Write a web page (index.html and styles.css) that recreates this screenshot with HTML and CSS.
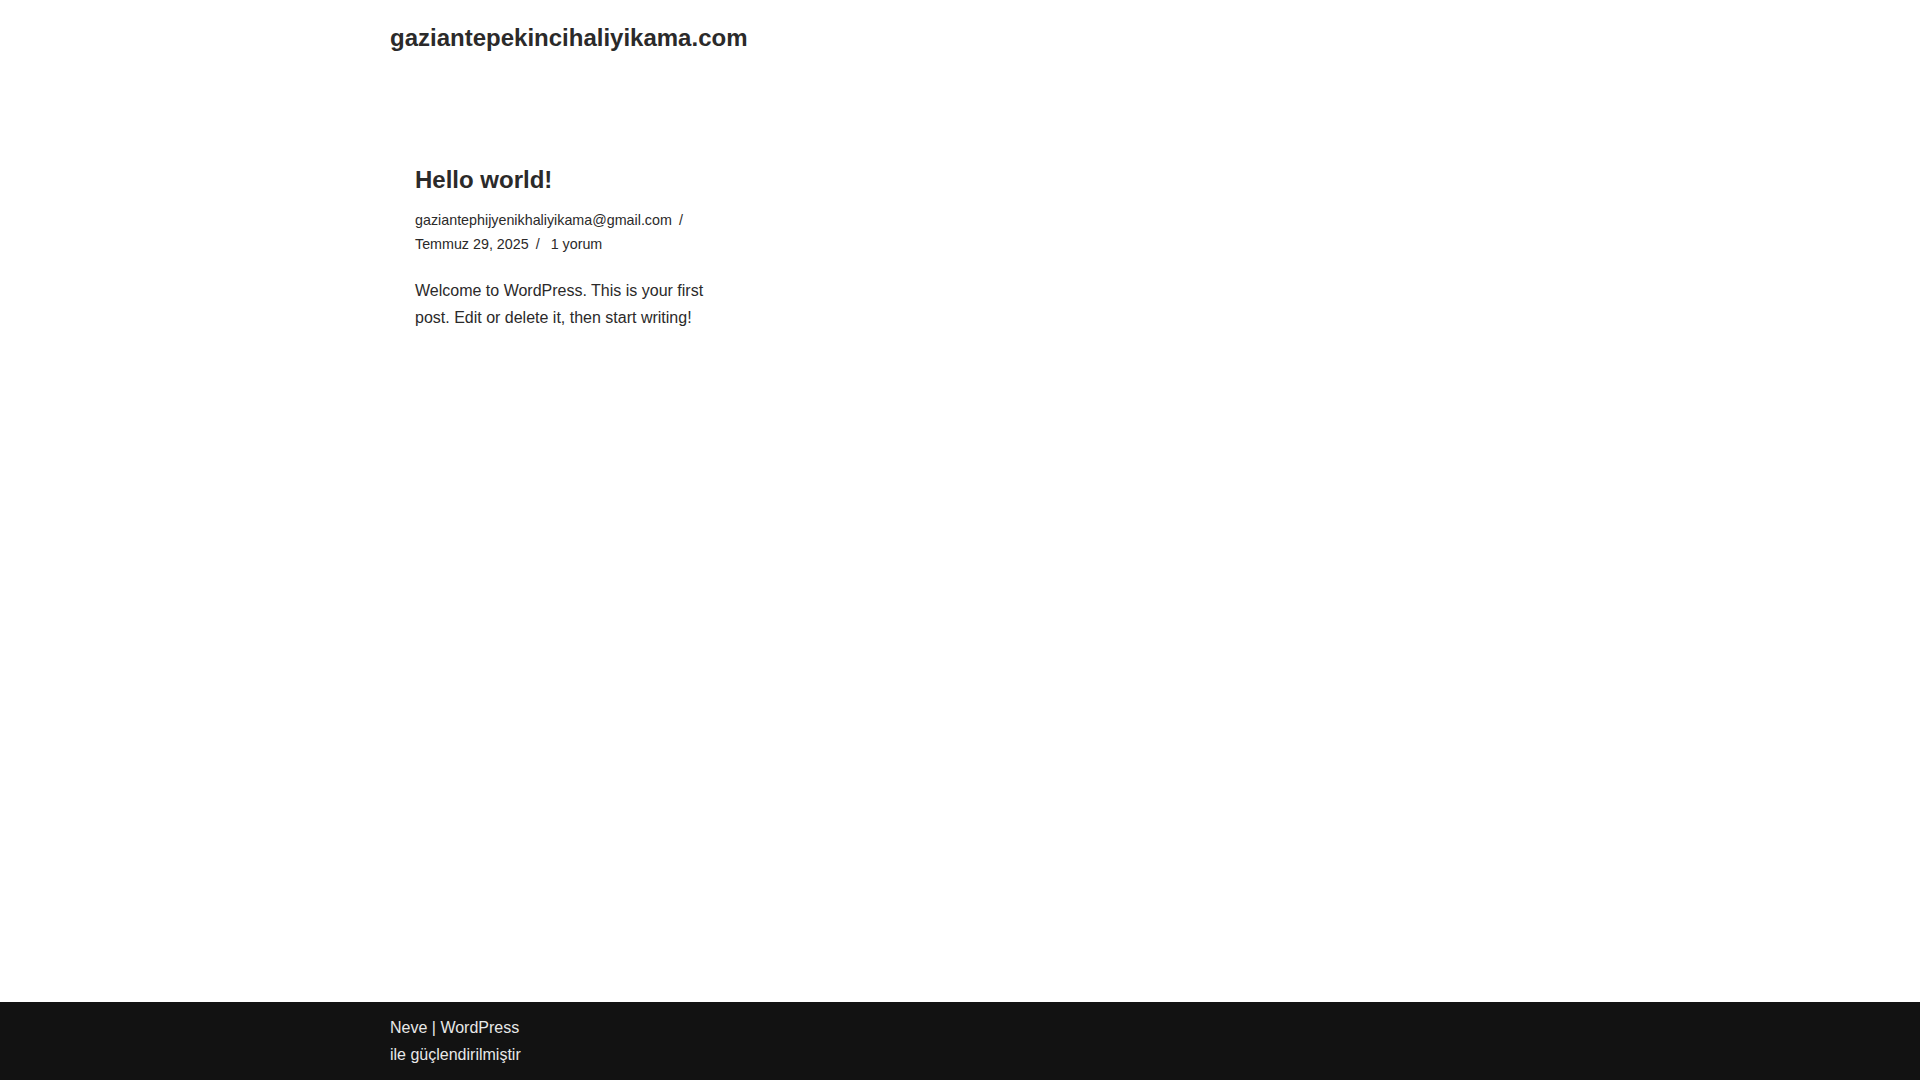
FILE: index.html
```html
<!DOCTYPE html>
<html lang="tr">
<head>
<meta charset="utf-8">
<title>gaziantepekincihaliyikama.com</title>
<link rel="stylesheet" href="styles.css">
</head>
<body>
<div class="wrapper">
  <header class="site-header">
    <div class="container">
      <a class="site-title" href="#">gaziantepekincihaliyikama.com</a>
    </div>
  </header>
  <main class="site-main">
    <div class="container">
      <article class="post">
        <h2 class="entry-title"><a href="#">Hello world!</a></h2>
        <ul class="meta-list">
          <li>gaziantephijyenikhaliyikama@gmail.com</li>
          <li>Temmuz 29, 2025</li>
          <li>1 yorum</li>
        </ul>
        <div class="excerpt">
          <p>Welcome to WordPress. This is your first post. Edit or delete it, then start writing!</p>
        </div>
      </article>
    </div>
  </main>
  <footer class="site-footer">
    <div class="container">
      <p class="credit"><a href="#">Neve</a> | <a href="#">WordPress</a><br>ile güçlendirilmiştir</p>
    </div>
  </footer>
</div>
</body>
</html>
```

FILE: styles.css
```css
* { box-sizing: border-box; }
html, body { margin: 0; padding: 0; }
body {
  font-family: "Liberation Sans", Arial, sans-serif;
  font-size: 16px;
  line-height: 1.7;
  color: #2b2a2a;
  background: #ffffff;
}
a { color: inherit; text-decoration: none; }
.wrapper {
  min-height: 100vh;
  display: flex;
  flex-direction: column;
}
.container {
  width: 1170px;
  margin: 0 auto;
  padding: 0 15px;
}
.site-header {
  padding: 24px 0 21px;
}
.site-title {
  display: block;
  font-size: 24px;
  font-weight: 700;
  line-height: 1.2;
}
.site-main {
  flex: 1;
  padding-top: 90px;
}
.post {
  width: 335px;
  padding-left: 25px;
}
.entry-title {
  margin: 0;
  font-size: 24px;
  font-weight: 700;
  line-height: 1.3;
}
.meta-list {
  list-style: none;
  margin: 13px 0 0;
  padding: 0;
  font-size: 14.3px;
  line-height: 1.68;
}
.meta-list li {
  display: inline;
}
.meta-list li:not(:last-child)::after {
  content: "/";
  padding: 0 7px;
}
.excerpt p {
  margin: 21px 0 0;
}
.site-footer {
  background: #121212;
  color: #e8e8e8;
  padding: 12px 0 12px;
}
.credit {
  margin: 0;
}
```
